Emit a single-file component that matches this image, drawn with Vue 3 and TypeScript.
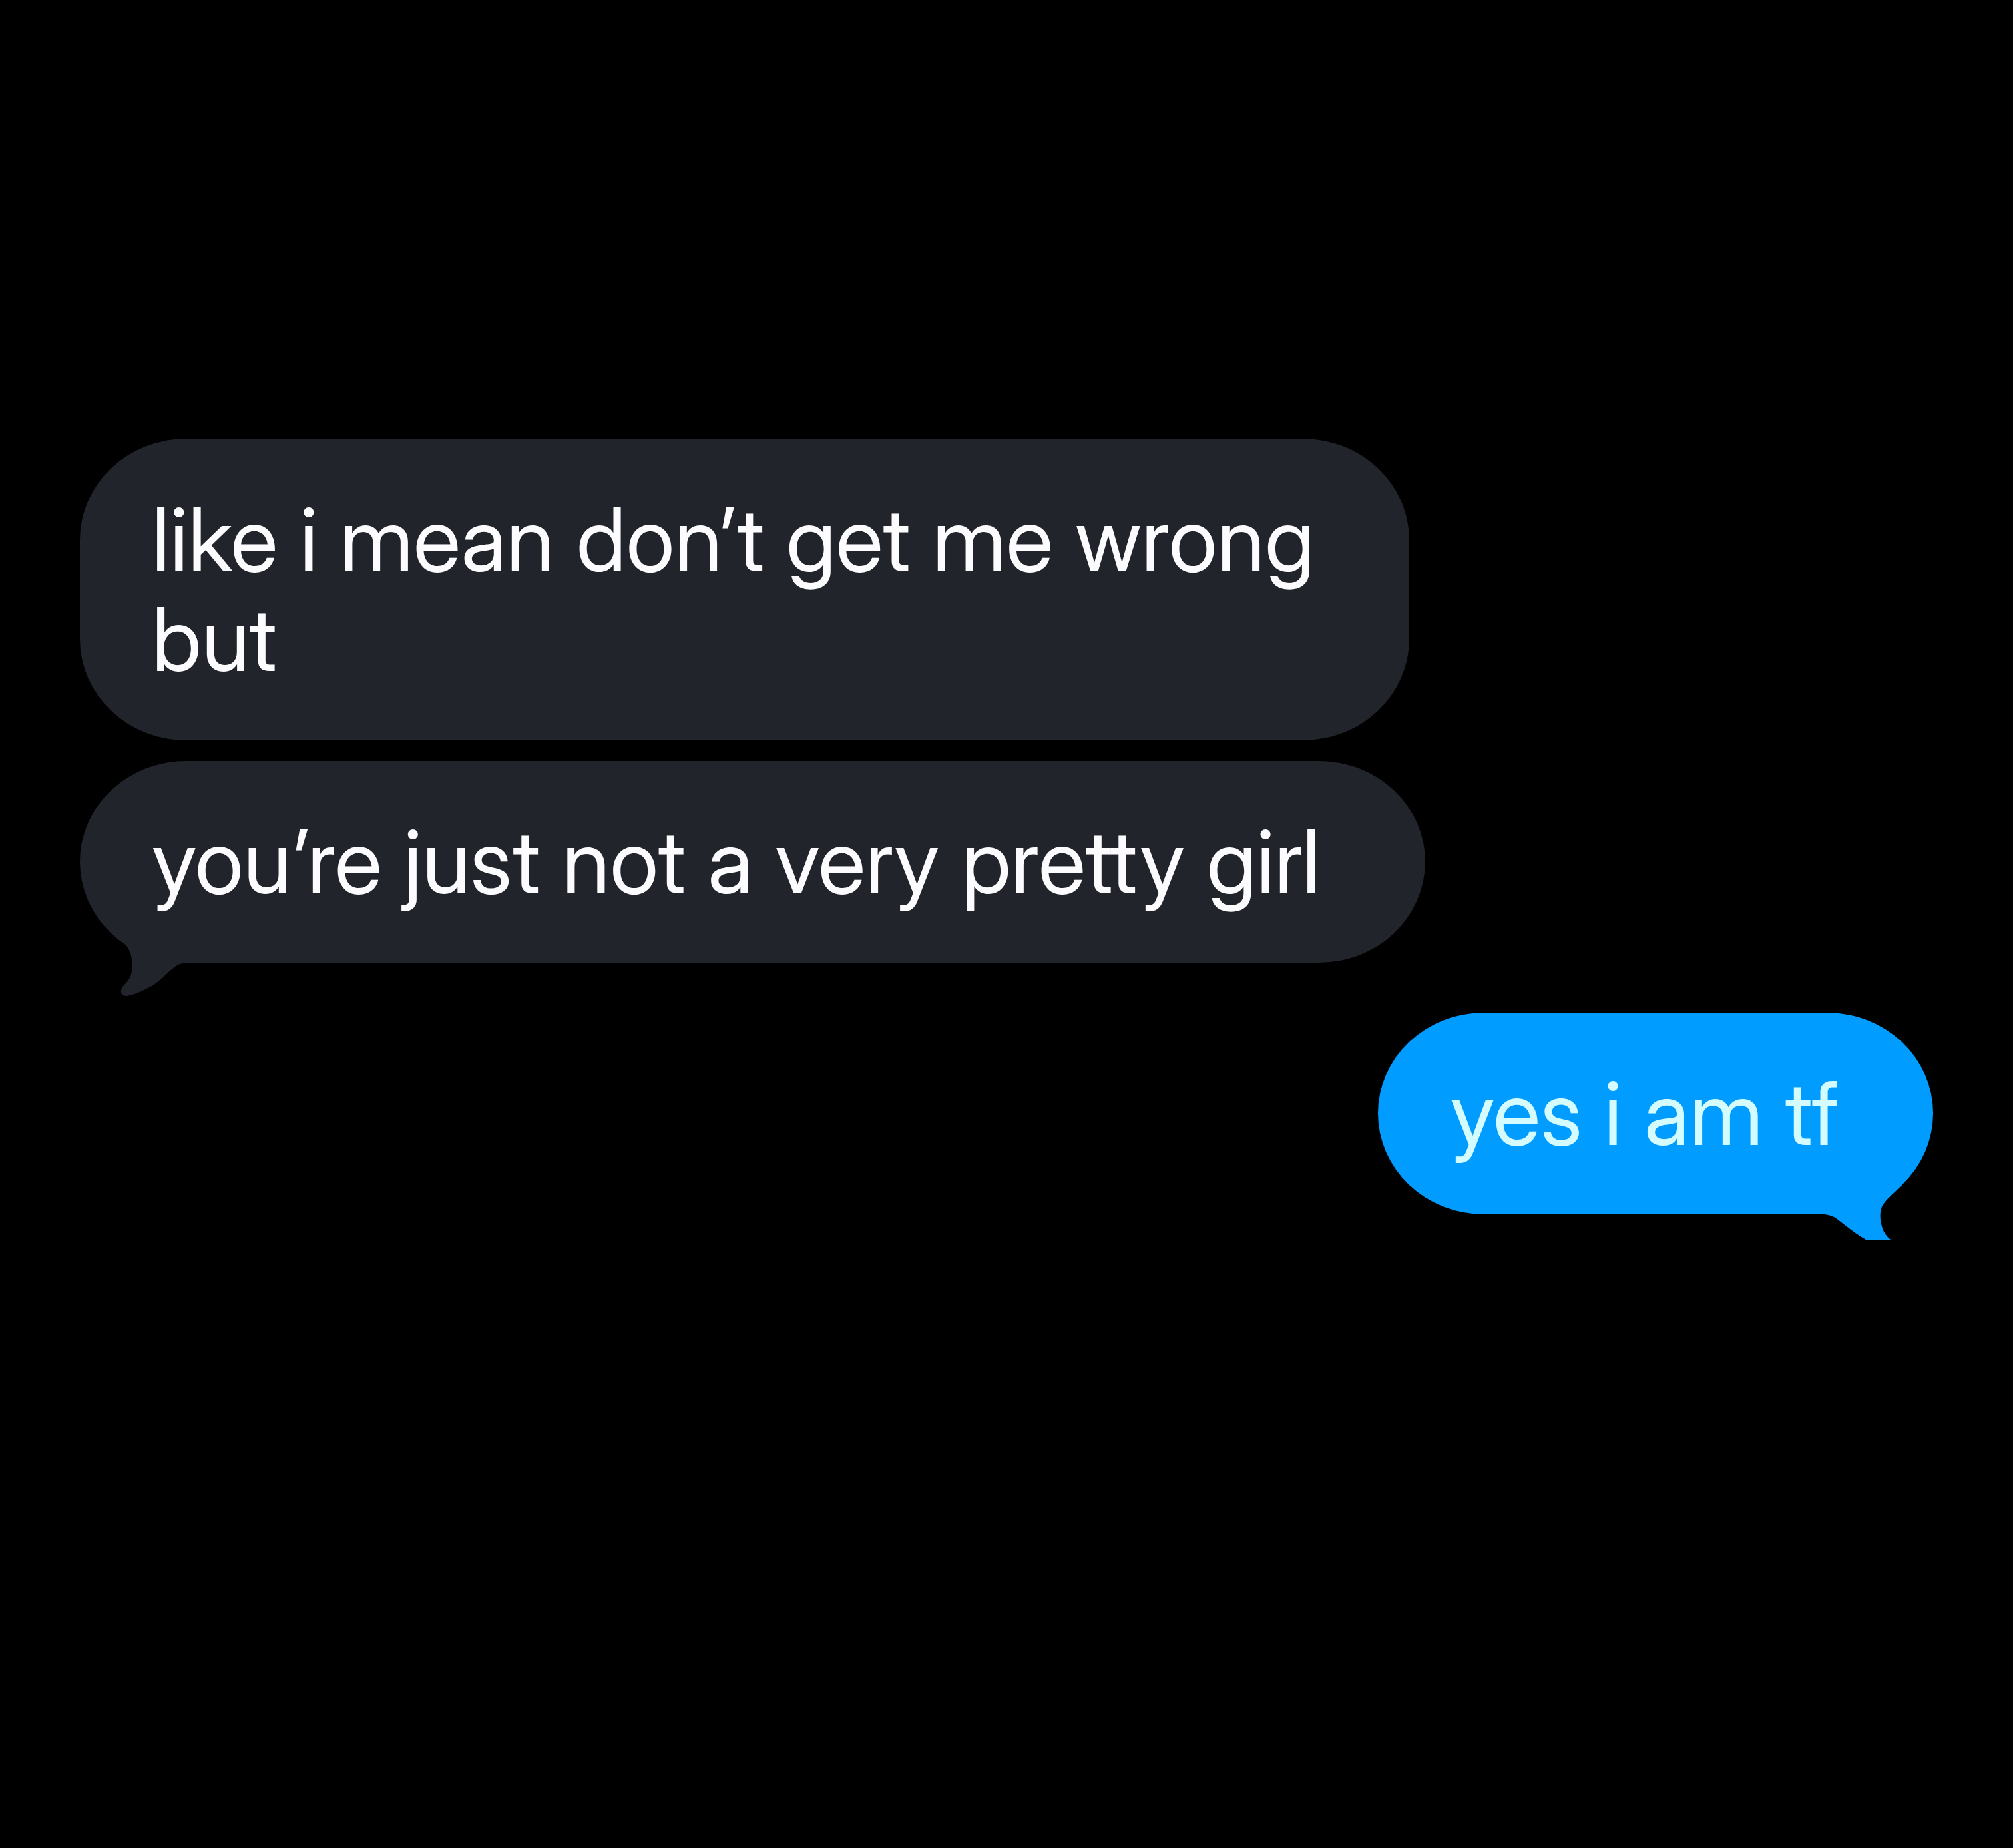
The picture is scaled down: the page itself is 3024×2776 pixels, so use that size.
<script setup lang="ts">
interface Message {
  id: number
  side: 'incoming' | 'outgoing'
  text: string
  tail: boolean
}

const messages: Message[] = [
  { id: 1, side: 'incoming', text: 'like i mean don’t get me wrong\nbut', tail: false },
  { id: 2, side: 'incoming', text: 'you’re just not a very pretty girl', tail: true },
  { id: 3, side: 'outgoing', text: 'yes i am tf', tail: true },
]
</script>

<template>
  <main class="conversation">
    <ol class="thread">
      <li
        v-for="message in messages"
        :key="message.id"
        class="row"
        :class="[message.side, { last: message.tail }]"
      >
        <div class="bubble">
          <svg
            v-if="message.tail && message.side === 'incoming'"
            class="tail"
            viewBox="0 0 120 100"
            aria-hidden="true"
          >
            <path
              d="M0 12C12 21 18 32 18 46C19 62 17 70 8 79C3 84 1 88 2 92C4 97 9 98 15 96C24 94 38 88 51 80C63 72 72 61 82 54C88 49 94 47 104 47V0H8Z"
            />
          </svg>
          <svg
            v-else-if="message.tail"
            class="tail"
            viewBox="0 0 120 100"
            aria-hidden="true"
          >
            <path
              d="M118 8C102 25 88 34 85 46C82 56 84 68 88 78C91 84 94 88 99 92H62C48 84 34 73 20 62C14 57 8 55 0 54V4L110 0Z"
            />
          </svg>
          <p class="text">{{ message.text }}</p>
        </div>
      </li>
    </ol>
  </main>
</template>

<style>
body {
  background: #000;
}
</style>

<style scoped>
.conversation {
  box-sizing: border-box;
  min-height: 100vh;
  padding: 659px 120px 120px;
  background: #000;
  font-family: 'Inter Display', Inter, 'Liberation Sans', sans-serif;
}

.thread {
  display: flex;
  flex-direction: column;
  gap: 31px;
  margin: 0;
  padding: 0;
  list-style: none;
}

.row {
  display: flex;
}

.outgoing {
  justify-content: flex-end;
  margin-top: 44px;
}

.bubble {
  position: relative;
  padding: 76px 142px 77px 108px;
  border-radius: 160px / 152px;
  background: #21242b;
  color: #fcfcff;
}

.incoming.last .bubble {
  padding-right: 158px;
}

.outgoing .bubble {
  background: #009cff;
  color: #d4fcff;
}

.text {
  position: relative;
  margin: 0;
  font-size: 132px;
  line-height: 150px;
  white-space: pre-line;
}

.tail {
  position: absolute;
  bottom: -53px;
  left: 60px;
  width: 120px;
  height: 100px;
  fill: #21242b;
}

.outgoing .tail {
  right: 43px;
  bottom: -46px;
  left: auto;
  fill: #009cff;
}
</style>
